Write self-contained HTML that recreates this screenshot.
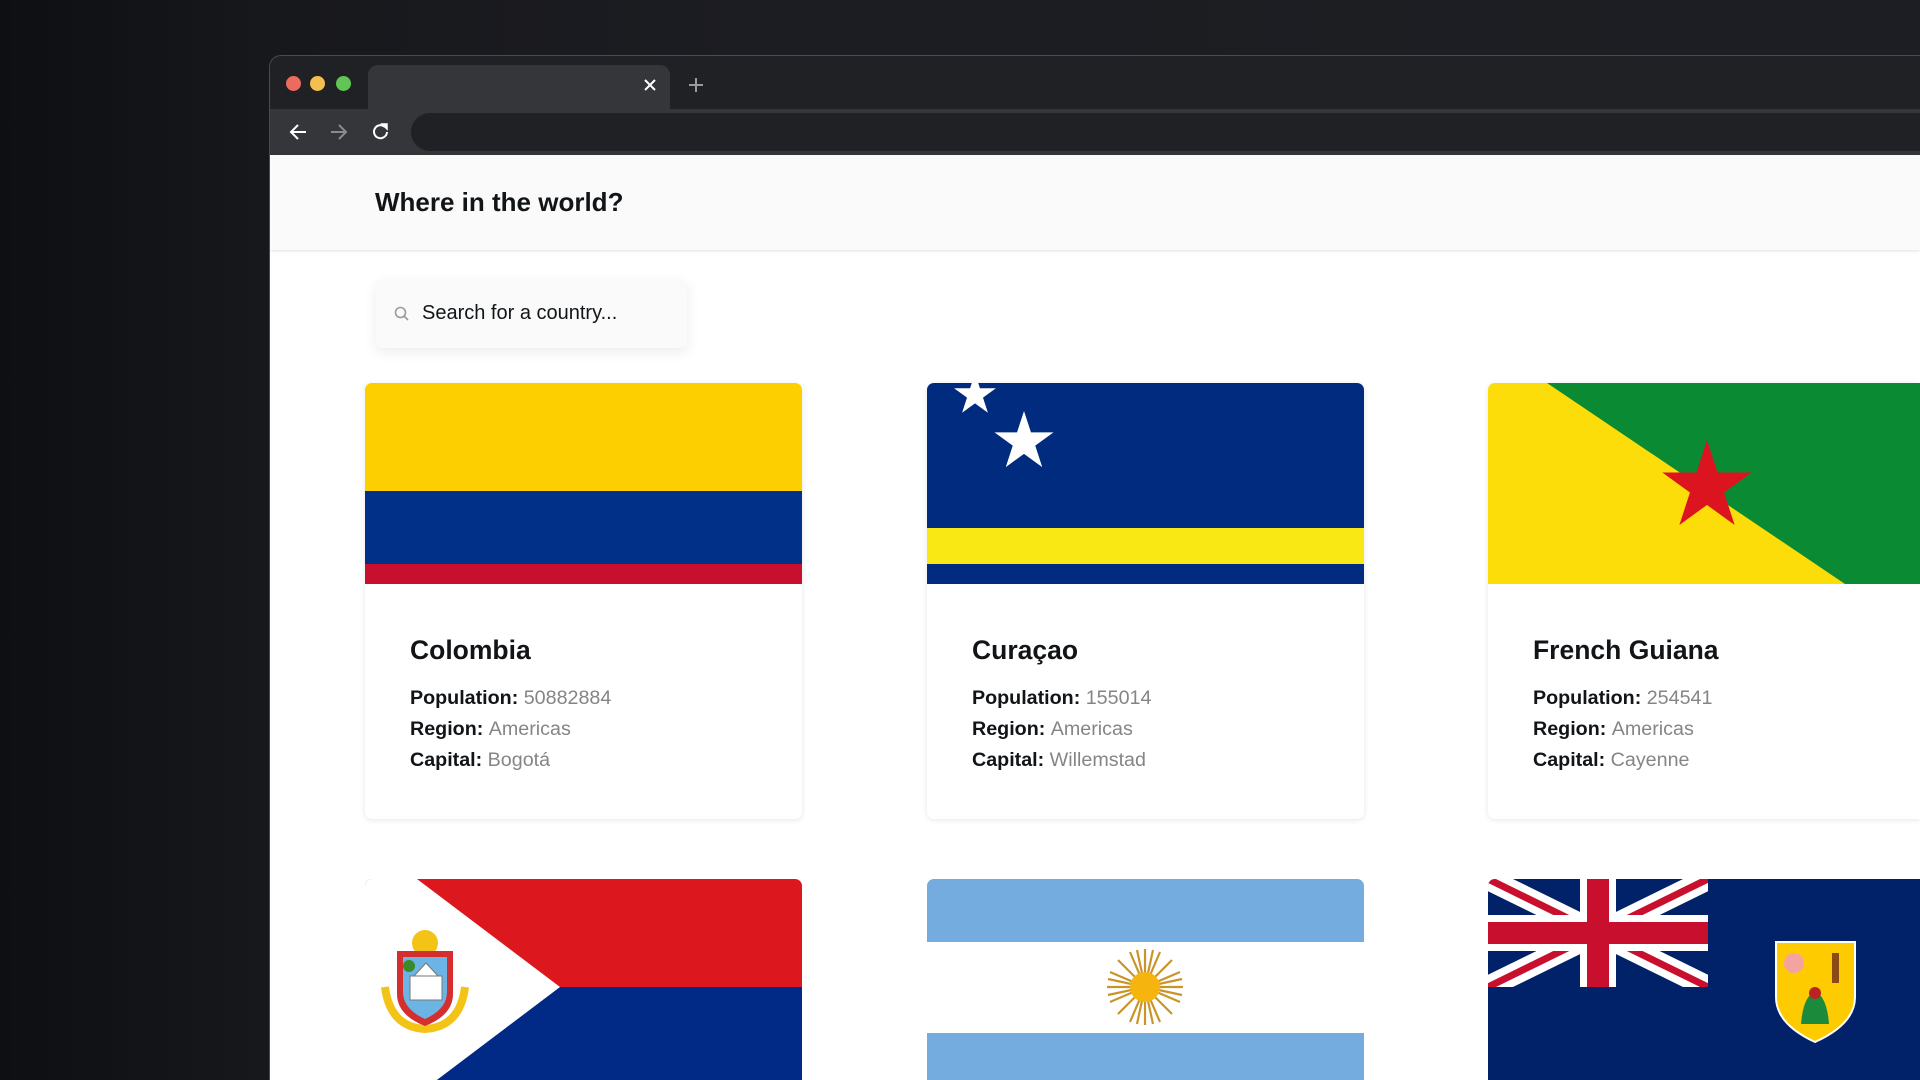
<!DOCTYPE html>
<html><head><meta charset="utf-8"><style>
*{margin:0;padding:0;box-sizing:border-box}
html,body{width:1920px;height:1080px;overflow:hidden}
body{background:linear-gradient(90deg,#0e0f12 0%,#17181c 14%,#1c1d22 40%,#1d1e23 100%);font-family:"Liberation Sans",Arial,sans-serif}
.root{position:relative;width:1920px;height:1080px;overflow:hidden}
.win{position:absolute;left:269px;top:55px;width:1651px;height:1025px;border-radius:12px 0 0 0;background:#202124;border:1px solid #4a4b50;border-right:0;border-bottom:0;overflow:hidden}
.tabs{position:absolute;left:0;top:0;right:0;height:53px;background:#202124}
.dot{position:absolute;top:20px;width:15px;height:15px;border-radius:50%}
.tab{position:absolute;left:98px;top:9px;width:302px;height:45px;background:#35363a;border-radius:10px 10px 0 0}
.toolbar{position:absolute;left:0;top:53px;right:0;height:46px;background:#35363a}
.url{position:absolute;left:141px;top:4px;width:1600px;height:38px;border-radius:19px;background:#202124}
.page{position:absolute;left:0;top:99px;right:0;bottom:0;background:#fff}
.hdr{position:absolute;left:0;top:0;right:0;height:95px;background:#fafafa;box-shadow:0 1px 3px rgba(0,0,0,.12)}
.hdr h1{position:absolute;left:105px;top:32px;font-size:26px;font-weight:bold;color:#111517}
.search{position:absolute;left:106px;top:125px;width:311px;height:68px;background:#fafafa;border-radius:6px;box-shadow:0 4px 14px rgba(0,0,0,.08)}
.search span{position:absolute;left:46px;top:22px;font-size:20px;color:#111517}
.card{position:absolute;width:437px;height:436px;background:#fff;border-radius:7px;box-shadow:0 1px 6px rgba(0,0,0,.1);overflow:hidden}
.card.b{height:201px;border-radius:7px 7px 0 0;box-shadow:none}
.card svg{display:block}
.info{position:absolute;left:45px;top:252px;color:#111517}
.info h2{font-size:26.5px;font-weight:bold;margin-bottom:17px}
.info p{font-size:19.7px;line-height:31px;font-weight:bold}
.info p b{font-weight:normal;color:#858585}
</style></head><body><div class="root">
<div class="win">
 <div class="tabs">
  <div class="dot" style="left:16px;background:#ed6a5e"></div>
  <div class="dot" style="left:40px;background:#f5bf4f"></div>
  <div class="dot" style="left:66px;background:#61c554"></div>
  <div class="tab"></div>
  <svg style="position:absolute;left:373px;top:22px" width="14" height="14"><path d="M2 2L12 12M12 2L2 12" stroke="#fff" stroke-width="2"/></svg>
  <svg style="position:absolute;left:418px;top:21px" width="16" height="16"><path d="M8 1V15M1 8H15" stroke="#9a9ba0" stroke-width="2"/></svg>
 </div>
 <div class="toolbar">
  <svg style="position:absolute;left:18px;top:13px" width="20" height="20"><path d="M18 10H3M10 3L3 10L10 17" stroke="#fff" stroke-width="2" fill="none"/></svg>
  <svg style="position:absolute;left:59px;top:13px" width="20" height="20"><path d="M2 10H17M10 3L17 10L10 17" stroke="#8a8b90" stroke-width="2" fill="none"/></svg>
  <svg style="position:absolute;left:101px;top:13px" width="20" height="20"><path d="M16 10A6.5 6.5 0 1 1 14 5" stroke="#fff" stroke-width="2" fill="none"/><path d="M11 2H16V7Z" fill="#fff" stroke="#fff" stroke-width="1.5"/></svg>
  <div class="url"></div>
 </div>
 <div class="page">
  <div class="hdr"><h1>Where in the world?</h1></div>
  <div class="search">
   <svg style="position:absolute;left:18px;top:26px" width="16" height="16"><circle cx="6.5" cy="6.5" r="5" stroke="#9a9a9a" stroke-width="1.6" fill="none"/><path d="M10.2 10.2L14 14" stroke="#9a9a9a" stroke-width="1.6"/></svg>
   <span>Search for a country...</span>
  </div>
 </div>
</div>

<div class="card" style="left:365px;top:383px">
 <svg width="437" height="201"><rect width="437" height="108" fill="#fecf00"/><rect y="108" width="437" height="73" fill="#003087"/><rect y="181" width="437" height="20" fill="#c8102e"/></svg>
 <div class="info"><h2>Colombia</h2><p>Population: <b>50882884</b></p><p>Region: <b>Americas</b></p><p>Capital: <b>Bogotá</b></p></div>
</div>
<div class="card" style="left:927px;top:383px">
 <svg width="437" height="201"><rect width="437" height="201" fill="#002b7f"/><rect y="145" width="437" height="36" fill="#f9e814"/>
 <polygon fill="#fff" transform="translate(48,12) scale(22)" points="0,-1 0.2245,-0.309 0.951,-0.309 0.363,0.118 0.588,0.809 0,0.382 -0.588,0.809 -0.363,0.118 -0.951,-0.309 -0.2245,-0.309"/>
 <polygon fill="#fff" transform="translate(97,59) scale(31)" points="0,-1 0.2245,-0.309 0.951,-0.309 0.363,0.118 0.588,0.809 0,0.382 -0.588,0.809 -0.363,0.118 -0.951,-0.309 -0.2245,-0.309"/></svg>
 <div class="info"><h2>Curaçao</h2><p>Population: <b>155014</b></p><p>Region: <b>Americas</b></p><p>Capital: <b>Willemstad</b></p></div>
</div>
<div class="card" style="left:1488px;top:383px;width:432px;border-radius:7px 0 0 7px">
 <svg width="437" height="201"><rect width="437" height="201" fill="#fcdd09"/><polygon points="59,0 437,0 437,201 357,201" fill="#0b8a34"/>
 <polygon fill="#dc1420" transform="translate(219,104) scale(47)" points="0,-1 0.2245,-0.309 0.951,-0.309 0.363,0.118 0.588,0.809 0,0.382 -0.588,0.809 -0.363,0.118 -0.951,-0.309 -0.2245,-0.309"/></svg>
 <div class="info"><h2>French Guiana</h2><p>Population: <b>254541</b></p><p>Region: <b>Americas</b></p><p>Capital: <b>Cayenne</b></p></div>
</div>

<div class="card b" style="left:365px;top:879px">
 <svg width="437" height="201"><rect width="437" height="108" fill="#dc171d"/><rect y="108" width="437" height="108" fill="#012a87"/><polygon points="0,0 52,0 195,108 52,216 0,216" fill="#fff"/>
 <path d="M20 108Q25 148 60 150Q95 148 100 108" stroke="#f3c316" stroke-width="8" fill="none"/>
 <circle cx="60" cy="64" r="13" fill="#f3c316"/>
 <path d="M32 72H88V115Q88 136 60 147Q32 136 32 115Z" fill="#d42e2e"/><path d="M38 78H82V113Q82 130 60 140Q38 130 38 113Z" fill="#6cb4e4"/>
 <rect x="45" y="97" width="32" height="24" fill="#fff" stroke="#777" stroke-width="1"/><polygon points="49,97 61,84 73,97" fill="#fff" stroke="#777"/>
 <circle cx="44" cy="87" r="6" fill="#3a8a2a"/></svg>
</div>
<div class="card b" style="left:927px;top:879px">
 <svg width="437" height="201"><rect width="437" height="216" fill="#74acdf"/><rect y="63" width="437" height="91" fill="#fff"/>
 <g stroke="#c9952a" stroke-width="2.2"><path d="M218 70V146M180 108H256M191 81L245 135M245 81L191 135M203 73L233 143M233 73L203 143M183 93L253 123M183 123L253 93M210 71L226 145M226 71L210 145M181 100L255 116M181 116L255 100"/></g>
 <circle cx="218" cy="108" r="15" fill="#f6b40e"/></svg>
</div>
<div class="card b" style="left:1488px;top:879px;width:432px;border-radius:7px 0 0 0">
 <svg width="437" height="201"><rect width="437" height="216" fill="#012169"/>
 <svg width="220" height="108"><path d="M0 0L220 108M220 0L0 108" stroke="#fff" stroke-width="22"/><path d="M0 0L220 108M220 0L0 108" stroke="#c8102e" stroke-width="7"/><path d="M110 0V108M0 54H220" stroke="#fff" stroke-width="36"/><path d="M110 0V108M0 54H220" stroke="#c8102e" stroke-width="22"/></svg>
 <path d="M288 63H367V118Q367 145 327 163Q288 145 288 118Z" fill="#fecb00" stroke="#fff" stroke-width="2"/>
 <path d="M313 145Q315 118 327 112Q339 118 341 145Z" fill="#1b8a3a"/><circle cx="327" cy="114" r="6" fill="#b22"/><circle cx="306" cy="84" r="10" fill="#f4a4a0"/><rect x="344" y="74" width="7" height="30" fill="#8a4b14"/></svg>
</div>
</div></body></html>
